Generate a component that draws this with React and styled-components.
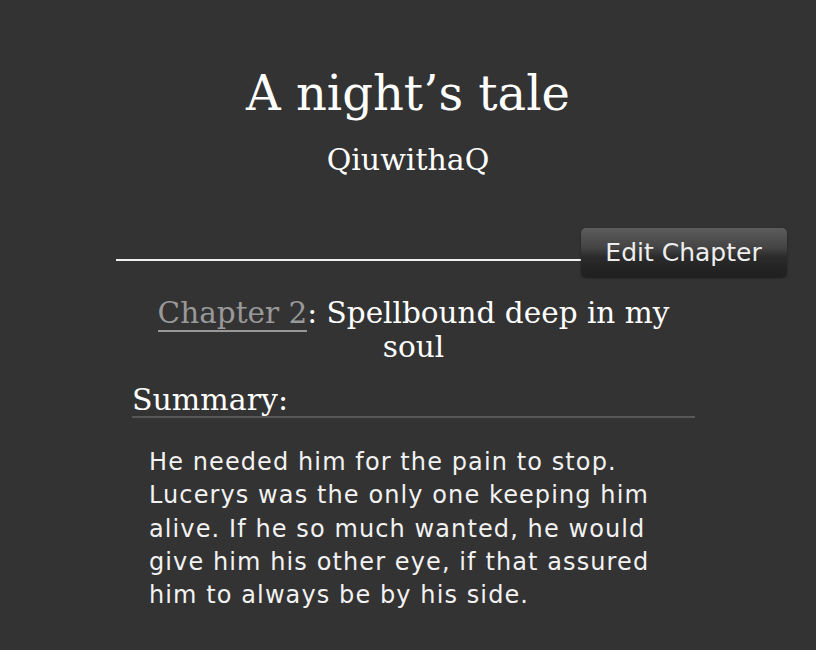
import styled, { createGlobalStyle } from "styled-components";

const Global = createGlobalStyle`
  html, body {
    margin: 0;
    padding: 0;
    background: #333;
    color: #fff;
  }
`;

const Page = styled.div`
  width: 816px;
  min-height: 650px;
  box-sizing: border-box;
  padding-top: 63px;
  display: flex;
  flex-direction: column;
  align-items: center;
`;

const Title = styled.h1`
  margin: 0;
  font-family: "DejaVu Serif", Georgia, serif;
  font-weight: normal;
  font-size: 48px;
  line-height: 60px;
  text-align: center;
`;

const Byline = styled.h2`
  margin: 17px 0 0;
  font-family: "DejaVu Serif", Georgia, serif;
  font-weight: normal;
  font-size: 30px;
  line-height: 40px;
  text-align: center;
`;

const ActionRow = styled.div`
  margin-top: 48px;
  width: 671px;
  margin-left: 86px;
  display: flex;
  align-items: flex-end;
`;

const Rule = styled.div`
  flex: 1;
  height: 2px;
  background: #f0f0f0;
  margin-bottom: 16px;
`;

const Button = styled.a`
  width: 206px;
  height: 49px;
  box-sizing: border-box;
  display: flex;
  align-items: center;
  justify-content: center;
  border-radius: 5px;
  background: linear-gradient(#5c5c5c 0%, #444 40%, #2a2a2a 60%, #1f1f1f 100%);
  box-shadow: 0 1px 2px rgba(0, 0, 0, 0.5);
  color: #eee;
  font-family: "DejaVu Sans", Verdana, sans-serif;
  font-size: 25px;
  cursor: pointer;
`;

const Content = styled.div`
  width: 563px;
  margin-left: 11px;
`;

const ChapterTitle = styled.h3`
  margin: 19px 0 0;
  font-family: "DejaVu Serif", Georgia, serif;
  font-weight: normal;
  font-size: 29.5px;
  line-height: 34px;
  text-align: center;
  padding: 0 16px;
`;

const ChapterLink = styled.a`
  color: #999;
  text-decoration: none;
  border-bottom: 2px solid #999;
`;

const SummaryHead = styled.h3`
  margin: 20px 0 0;
  font-family: "DejaVu Serif", Georgia, serif;
  font-weight: normal;
  font-size: 30px;
  line-height: 32px;
  border-bottom: 2px solid #585858;
`;

const Summary = styled.p`
  margin: 28px 30px 0 17px;
  font-family: "DejaVu Sans", Verdana, sans-serif;
  font-size: 24px;
  letter-spacing: 1.1px;
  line-height: 33.3px;
  color: #f2f2f2;
`;

export default function App() {
  return (
    <>
      <Global />
      <Page>
        <Title>A night’s tale</Title>
        <Byline>QiuwithaQ</Byline>
        <ActionRow>
          <Rule />
          <Button>Edit Chapter</Button>
        </ActionRow>
        <Content>
          <ChapterTitle>
            <ChapterLink>Chapter 2</ChapterLink>: Spellbound deep in my soul
          </ChapterTitle>
          <SummaryHead>Summary:</SummaryHead>
          <Summary>
            He needed him for the pain to stop. Lucerys was the only one keeping
            him alive. If he so much wanted, he would give him his other eye, if
            that assured him to always be by his side.
          </Summary>
        </Content>
      </Page>
    </>
  );
}
